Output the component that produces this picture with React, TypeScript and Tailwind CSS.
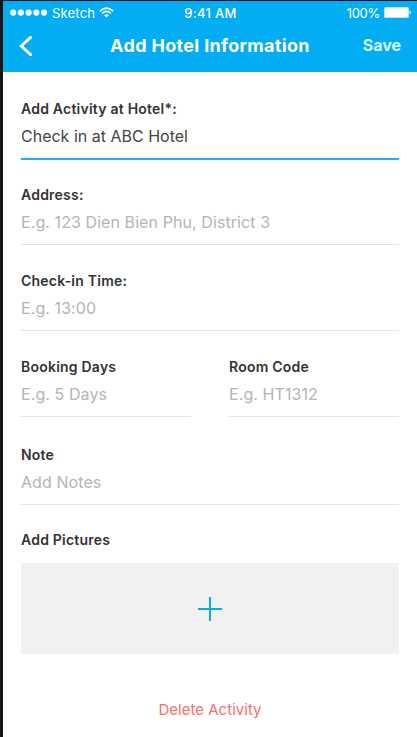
import { useState } from "react";
import type { FormEvent } from "react";

type FieldProps = {
  id: string;
  label: string;
  placeholder?: string;
  value: string;
  active?: boolean;
  onChange: (value: string) => void;
};

function Field({ id, label, placeholder, value, active, onChange }: FieldProps) {
  return (
    <div className="w-full">
      <label htmlFor={id} className="block text-[14px] leading-5 font-semibold tracking-[0.22px] text-[#333333]">
        {label}
      </label>
      <input
        type="text"
        id={id}
        name={id}
        placeholder={placeholder}
        value={value}
        onChange={(event) => onChange(event.target.value)}
        className={
          active
            ? "block w-full h-[41px] pb-[5px] border-b-2 border-[#2aaaf0] text-[16px] text-[#444444] focus:outline-none"
            : "block w-full h-10 pb-[5px] border-b border-[#e4e4e4] text-[16px] tracking-[0.08px] text-[#444444] placeholder:text-[#b4b4b4] focus:outline-none"
        }
      />
    </div>
  );
}

function StatusBar() {
  return (
    <div className="grid grid-cols-3 items-center h-6 pl-[7px] pr-[6px] text-[13px] leading-4">
      <div className="flex items-center">
        <svg width="38" height="8" viewBox="0 0 38 8" fill="currentColor">
          <circle cx="3.2" cy="3.6" r="3.1" />
          <circle cx="10.9" cy="3.6" r="3.1" />
          <circle cx="18.6" cy="3.6" r="3.1" />
          <circle cx="26.3" cy="3.6" r="3.1" />
          <circle cx="34" cy="3.6" r="3.1" />
        </svg>
        <span className="ml-[4px] tracking-[0.2px]">Sketch</span>
        <svg className="ml-[4px] mb-[2px]" width="15" height="11" viewBox="0 0 15 11" fill="none" stroke="currentColor">
          <path d="M0.9 4.1 Q7.5 -1.9 14.1 4.1" strokeWidth="1.5" />
          <path d="M3.1 6.4 Q7.5 2.4 11.9 6.4" strokeWidth="1.5" />
          <path d="M5 8.2 Q7.5 6.2 10 8.2 L7.5 10.6 Z" fill="currentColor" stroke="none" />
        </svg>
      </div>
      <span className="text-center font-medium tracking-[0.3px]">9:41 AM</span>
      <div className="flex items-center justify-end">
        <span className="tracking-[-0.3px]">100%</span>
        <svg className="ml-1 mb-[2px]" width="27" height="11" viewBox="0 0 27 11">
          <rect x="0" y="0" width="25" height="11" rx="1.5" fill="#b5e6fb" />
          <rect x="1" y="1" width="23" height="9" rx="0.5" fill="#fff" />
          <path d="M25.5 3.5 Q27 4 27 5.5 Q27 7 25.5 7.5 Z" fill="#d9f2fd" />
        </svg>
      </div>
    </div>
  );
}

export default function App() {
  const [activity, setActivity] = useState("Check in at ABC Hotel");
  const [address, setAddress] = useState("");
  const [checkIn, setCheckIn] = useState("");
  const [days, setDays] = useState("");
  const [roomCode, setRoomCode] = useState("");
  const [note, setNote] = useState("");

  const handleSave = (event: FormEvent) => {
    event.preventDefault();
  };

  return (
    <div className="h-[737px] w-[417px] overflow-hidden bg-[#151515] pl-[3px] pt-px font-['Inter',sans-serif]">
      <form onSubmit={handleSave} className="h-full bg-white">
        <header className="h-[71px] bg-[#03adf3] text-white">
          <StatusBar />
          <div className="grid grid-cols-[60px_1fr_60px] items-center h-10">
            <button type="button" aria-label="Back" className="pl-4 pt-px">
              <svg width="16" height="20" viewBox="0 0 16 20" fill="none" stroke="currentColor" strokeWidth="2.8">
                <path d="M11.6 1.4 L2.2 10 L11.6 18.6" strokeLinecap="round" />
              </svg>
            </button>
            <h1 className="text-center whitespace-nowrap text-[18px] font-bold tracking-[0.33px]">Add Hotel Information</h1>
            <button type="submit" className="pr-4 text-right text-[16px] font-bold text-[#d5fcff]">
              Save
            </button>
          </div>
        </header>

        <main className="flex flex-col px-[18px] pt-[27px]">
          <Field id="activity" label="Add Activity at Hotel*:" value={activity} onChange={setActivity} active />
          <div className="mt-[25px] flex flex-col gap-[26px]">
            <Field id="address" label="Address:" placeholder="E.g. 123 Dien Bien Phu, District 3" value={address} onChange={setAddress} />
            <Field id="checkIn" label="Check-in Time:" placeholder="E.g. 13:00" value={checkIn} onChange={setCheckIn} />
            <div className="grid grid-cols-2 gap-[38px]">
              <Field id="days" label="Booking Days" placeholder="E.g. 5 Days" value={days} onChange={setDays} />
              <Field id="roomCode" label="Room Code" placeholder="E.g. HT1312" value={roomCode} onChange={setRoomCode} />
            </div>
          </div>
          <div className="mt-7">
            <Field id="note" label="Note" placeholder="Add Notes" value={note} onChange={setNote} />
          </div>

          <h2 className="mt-[25px] text-[14px] leading-5 font-semibold tracking-[0.22px] text-[#333333]">Add Pictures</h2>
          <button type="button" aria-label="Add Pictures" className="mt-[13px] flex h-[91px] items-center justify-center bg-[#f1f1f1] pt-px">
            <svg width="24" height="24" viewBox="0 0 24 24" stroke="#03adf3" strokeWidth="2">
              <path d="M12 0 V24 M0 12 H24" />
            </svg>
          </button>

          <button type="button" className="mt-[46px] self-center text-[15px] leading-5 tracking-[0.02px] text-[#f87070]">
            Delete Activity
          </button>
        </main>
      </form>
    </div>
  );
}
